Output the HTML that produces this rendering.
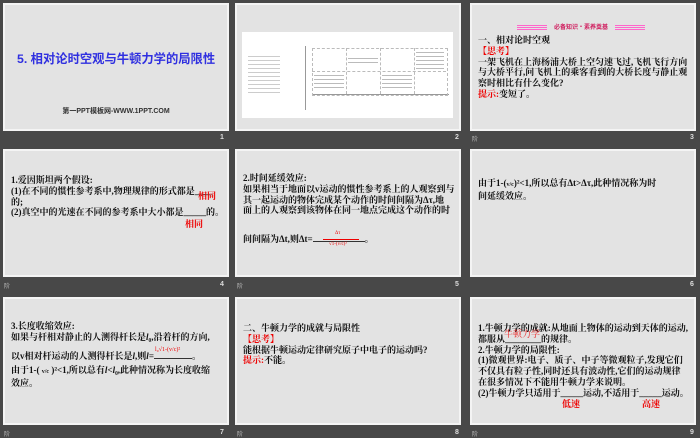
<!DOCTYPE html><html><head><meta charset="utf-8"><style>
body{margin:0;width:700px;height:438px;background:#484848;position:relative;overflow:hidden;font-family:"Liberation Serif","Noto Serif CJK SC","Noto Sans CJK SC",serif}
.s{position:absolute;width:222px;height:124px;background:#e3e3e3;border:2px solid #f4f4f4;overflow:hidden}
.n{position:absolute;color:#ddd;font:bold 7px "Liberation Sans",sans-serif}
.t{position:absolute;font-size:9px;line-height:10.8px;color:#111;font-weight:bold;white-space:nowrap;letter-spacing:0}
.r{color:#e00}
.a{position:absolute;color:#bbb;font:6px "Noto Sans CJK SC",sans-serif}
</style></head><body>
<div class="s" style="left:3px;top:3px">
<div style="position:absolute;left:12px;top:44px;font:bold 12.3px 'Liberation Sans','Noto Sans CJK SC',sans-serif;color:#3030e0;white-space:nowrap">5. 相对论时空观与牛顿力学的局限性</div>
<div style="position:absolute;left:0;width:222px;text-align:center;top:101px;font:bold 7px 'Liberation Sans','Noto Sans CJK SC',sans-serif;color:#333">第一PPT模板网-WWW.1PPT.COM</div>
</div>
<div class="s" style="left:235px;top:3px">
<div style="position:absolute;left:5px;top:27px;width:211px;height:86px;background:#fff">
<div style="position:absolute;left:63px;top:14px;width:0;height:64px;border-left:1px solid #999"></div>
<div style="position:absolute;left:70px;top:62px;width:137px;border-top:1px solid #999"></div>
<div style="position:absolute;left:70px;top:16px;width:134px;height:46px;border:1px dashed #bbb"></div>
<div style="position:absolute;left:70px;top:39px;width:134px;border-top:1px dashed #bbb"></div>
<div style="position:absolute;left:104px;top:16px;height:46px;border-left:1px dashed #bbb"></div>
<div style="position:absolute;left:138px;top:16px;height:46px;border-left:1px dashed #bbb"></div>
<div style="position:absolute;left:172px;top:16px;height:46px;border-left:1px dashed #bbb"></div>
<div style="position:absolute;left:6px;top:22px;width:32px;height:40px;background:repeating-linear-gradient(#fff 0 2px,#ccc 2px 3px,#fff 3px 4px)"></div>
<div style="position:absolute;left:72px;top:41px;width:30px;height:18px;background:repeating-linear-gradient(#fff 0 2px,#bbb 2px 3px,#fff 3px 4px)"></div>
<div style="position:absolute;left:140px;top:41px;width:30px;height:18px;background:repeating-linear-gradient(#fff 0 2px,#bbb 2px 3px,#fff 3px 4px)"></div>
<div style="position:absolute;left:106px;top:24px;width:30px;height:10px;background:repeating-linear-gradient(#fff 0 2px,#bbb 2px 3px,#fff 3px 4px)"></div>
<div style="position:absolute;left:174px;top:18px;width:28px;height:20px;background:repeating-linear-gradient(#fff 0 2px,#bbb 2px 3px,#fff 3px 4px)"></div>
</div>
</div>
<div class="s" style="left:470px;top:3px">
<div style="position:absolute;left:45px;top:20px;width:128px;height:5px;background:repeating-linear-gradient(#f6c 0 1px,transparent 1px 2px)"></div>
<div style="position:absolute;left:75px;top:17px;width:68px;height:10px;background:#e3e3e3;font:bold 6px 'Noto Sans CJK SC',sans-serif;color:#d02060;text-align:center;line-height:10px">必备知识·素养奠基</div>
<div class="t" style="left:6px;top:30px">一、相对论时空观<br><span class="r">【思考】</span><br>一架飞机在上海杨浦大桥上空匀速飞过,飞机飞行方向<br>与大桥平行,问飞机上的乘客看到的大桥长度与静止观<br>察时相比有什么变化?<br><span class="r">提示:</span>变短了。</div>
</div>
<div class="n" style="left:220px;top:134px">1</div>
<div class="n" style="left:455px;top:134px">2</div>
<div class="a" style="left:472px;top:134px">阶</div>
<div class="n" style="left:690px;top:134px">3</div>
<div class="s" style="left:3px;top:149px">
<div class="t" style="left:6px;top:24px">1.爱因斯坦两个假设:<br>(1)在不同的惯性参考系中,物理规律的形式都是____<br>的;<br>(2)真空中的光速在不同的参考系中大小都是_____的。</div>
<div class="t r" style="left:193px;top:40px">相同</div>
<div class="t r" style="left:180px;top:68px">相同</div>
</div>
<div class="s" style="left:235px;top:149px">
<div class="t" style="left:6px;top:22px">2.时间延缓效应:<br>如果相当于地面以v运动的惯性参考系上的人观察到与<br>其一起运动的物体完成某个动作的时间间隔为Δτ,地<br>面上的人观察到该物体在同一地点完成这个动作的时</div>
<div class="t" style="left:6px;top:83px">间间隔为Δt,则Δt=<span style="display:inline-block;width:52px;border-bottom:1px solid #333"></span>。</div>
<div style="position:absolute;left:98px;top:80px;font-size:5px;color:#e00">Δτ</div>
<div style="position:absolute;left:86px;top:88px;width:36px;border-top:1.5px solid #e00"></div>
<div style="position:absolute;left:92px;top:91px;font-size:5px;color:#e00">√1-(v/c)²</div>
</div>
<div class="s" style="left:470px;top:149px">
<div class="t" style="left:6px;top:27px">由于1-(<span style="font-size:6px">v/c</span>)²&lt;1,所以总有Δt&gt;Δτ,此种情况称为时<br>间延缓效应。</div>
</div>
<div class="a" style="left:4px;top:281px">阶</div>
<div class="n" style="left:220px;top:281px">4</div>
<div class="a" style="left:237px;top:281px">阶</div>
<div class="n" style="left:455px;top:281px">5</div>
<div class="n" style="left:690px;top:281px">6</div>
<div class="s" style="left:3px;top:297px">
<div class="t" style="left:6px;top:22px">3.长度收缩效应:<br>如果与杆相对静止的人测得杆长是<i>l</i>₀,沿着杆的方向,</div>
<div class="t" style="left:6px;top:52px">以v相对杆运动的人测得杆长是<i>l</i>,则<i>l</i>=<span style="display:inline-block;width:38px;border-bottom:1px solid #333"></span>。</div>
<div style="position:absolute;left:150px;top:48px;font-size:6px;color:#e00">l₀√1-(v/c)²</div>
<div class="t" style="left:6px;top:66px">由于1-( <span style="font-size:6px">v/c</span> )²&lt;1,所以总有<i>l</i>&lt;<i>l</i>₀,此种情况称为长度收缩<br>效应。</div>
</div>
<div class="s" style="left:235px;top:297px">
<div class="t" style="left:6px;top:24px">二、牛顿力学的成就与局限性<br><span class="r">【思考】</span><br>能根据牛顿运动定律研究原子中电子的运动吗?<br><span class="r">提示:</span>不能。</div>
</div>
<div class="s" style="left:470px;top:297px">
<div class="t" style="left:6px;top:24px">1.牛顿力学的成就:从地面上物体的运动到天体的运动,<br>都服从________的规律。<br>2.牛顿力学的局限性:<br>(1)微观世界:电子、质子、中子等微观粒子,发现它们<br>不仅具有粒子性,同时还具有波动性,它们的运动规律<br>在很多情况下不能用牛顿力学来说明。<br>(2)牛顿力学只适用于_____运动,不适用于_____运动。</div>
<div class="t r" style="left:32px;top:30px;font-weight:normal;opacity:.85">牛顿力学</div>
<div class="t r" style="left:90px;top:100px">低速</div>
<div class="t r" style="left:170px;top:100px">高速</div>
</div>
<div class="a" style="left:4px;top:429px">阶</div>
<div class="n" style="left:220px;top:429px">7</div>
<div class="a" style="left:237px;top:429px">阶</div>
<div class="n" style="left:455px;top:429px">8</div>
<div class="a" style="left:472px;top:429px">阶</div>
<div class="n" style="left:690px;top:429px">9</div>
</body></html>
